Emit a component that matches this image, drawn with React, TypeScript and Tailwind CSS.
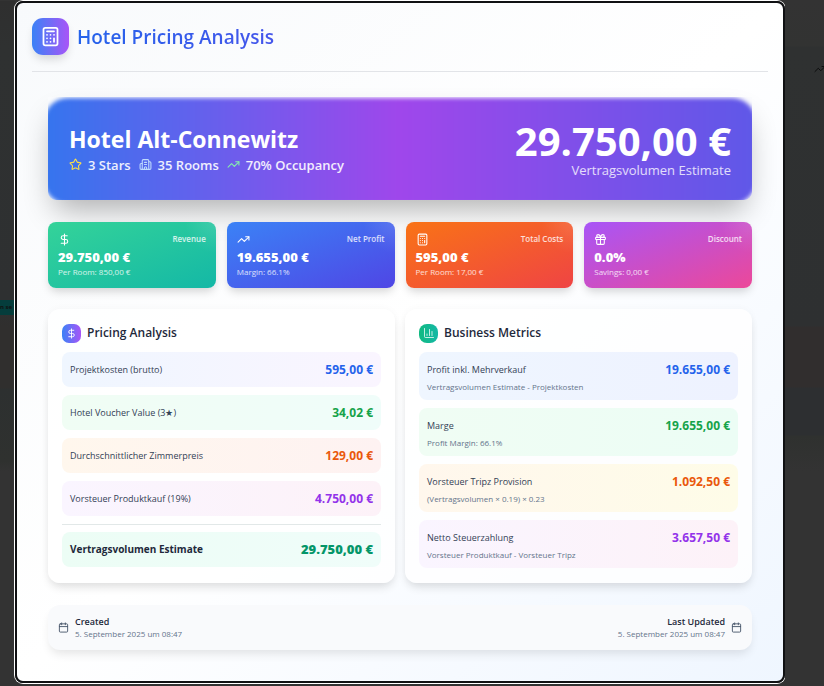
import type { ReactNode } from 'react';
import {
  Building2,
  Calculator,
  Calendar,
  ChartColumn,
  DollarSign,
  Gift,
  Star,
  TrendingUp,
} from 'lucide-react';

const stats = [
  {
    label: 'Revenue',
    value: '29.750,00 €',
    note: 'Per Room: 850,00 €',
    Icon: DollarSign,
    fill: 'bg-[linear-gradient(to_bottom_right,#34d399,#14b8a6)]',
  },
  {
    label: 'Net Profit',
    value: '19.655,00 €',
    note: 'Margin: 66.1%',
    Icon: TrendingUp,
    fill: 'bg-[linear-gradient(to_bottom_right,#3b82f6,#4f46e5)]',
  },
  {
    label: 'Total Costs',
    value: '595,00 €',
    note: 'Per Room: 17,00 €',
    Icon: Calculator,
    fill: 'bg-[linear-gradient(to_bottom_right,#f97316,#ef4444)]',
  },
  {
    label: 'Discount',
    value: '0.0%',
    note: 'Savings: 0,00 €',
    Icon: Gift,
    fill: 'bg-[linear-gradient(to_bottom_right,#a855f7,#ec4899)]',
  },
];

const pricing = [
  {
    label: 'Projektkosten (brutto)',
    value: '595,00 €',
    fill: 'bg-[linear-gradient(to_right,#eff6ff,#faf5ff)]',
    color: 'text-[#2563eb]',
  },
  {
    label: 'Hotel Voucher Value (3★)',
    value: '34,02 €',
    fill: 'bg-[linear-gradient(to_right,#f0fdf4,#f0fdfa)]',
    color: 'text-[#16a34a]',
  },
  {
    label: 'Durchschnittlicher Zimmerpreis',
    value: '129,00 €',
    fill: 'bg-[linear-gradient(to_right,#fff7ed,#fef2f2)]',
    color: 'text-[#ea580c]',
  },
  {
    label: 'Vorsteuer Produktkauf (19%)',
    value: '4.750,00 €',
    fill: 'bg-[linear-gradient(to_right,#faf5ff,#fdf2f8)]',
    color: 'text-[#9333ea]',
  },
];

const metrics = [
  {
    label: 'Profit inkl. Mehrverkauf',
    value: '19.655,00 €',
    note: 'Vertragsvolumen Estimate - Projektkosten',
    fill: 'bg-[linear-gradient(to_right,#eff6ff,#eef2ff)]',
    color: 'text-[#2563eb]',
  },
  {
    label: 'Marge',
    value: '19.655,00 €',
    note: 'Profit Margin: 66.1%',
    fill: 'bg-[linear-gradient(to_right,#f0fdf4,#ecfdf5)]',
    color: 'text-[#16a34a]',
  },
  {
    label: 'Vorsteuer Tripz Provision',
    value: '1.092,50 €',
    note: '(Vertragsvolumen × 0.19) × 0.23',
    fill: 'bg-[linear-gradient(to_right,#fff7ed,#fefce8)]',
    color: 'text-[#ea580c]',
  },
  {
    label: 'Netto Steuerzahlung',
    value: '3.657,50 €',
    note: 'Vorsteuer Produktkauf - Vorsteuer Tripz',
    fill: 'bg-[linear-gradient(to_right,#faf5ff,#fdf2f8)]',
    color: 'text-[#9333ea]',
  },
];

function Panel({ title, icon, children }: { title: string; icon: ReactNode; children: ReactNode }) {
  return (
    <section className="rounded-xl bg-white/80 px-3.5 pt-3.5 pb-[15px] shadow-[0_6px_10px_-2px_rgba(0,0,0,0.12),0_0_8px_rgba(0,0,0,0.03)]">
      <h3 className="flex h-5 items-center gap-1.5 text-xs font-semibold text-[#1e293b]">
        {icon}
        {title}
      </h3>
      {children}
    </section>
  );
}

export default function App() {
  return (
    <div className="flex min-h-screen items-start overflow-hidden bg-[#333333] pt-px font-['Open_Sans','Noto_Sans',sans-serif]">
      <div className="w-[15px] shrink-0 self-stretch overflow-hidden bg-[linear-gradient(to_bottom,#2f2f2f_0,#2f3131_45px,#2e3031_300px,#302f2e_326px,#302f2e_387px,#2d3030_388px,#2f312f_460px,#333333_470px)] pt-[299px]">
        <div className="flex h-[15px] items-center bg-[#053d3c] text-[6px] font-bold whitespace-nowrap text-[#111111]">
          n se
        </div>
      </div>

      <div
        role="dialog"
        aria-labelledby="dialog-title"
        className="min-w-0 flex-1 rounded-lg border-2 border-[#101113] bg-[linear-gradient(to_bottom_right,#f8fafc,#ffffff_50%,#eff6ff)] pb-[31px] shadow-[0_0_0_1px_#ffffff]"
      >
        <header className="mx-[15px] flex items-center gap-2 border-b border-[#e2e4e8] pt-[15px] pb-4">
          <span className="flex size-[37px] items-center justify-center rounded-[11px] bg-[linear-gradient(to_right,#3b82f6,#a855f7)] text-white shadow-[0_6px_10px_-2px_rgba(0,0,0,0.15)]">
            <Calculator size={21} strokeWidth={2} />
          </span>
          <h1
            id="dialog-title"
            className="grow bg-[linear-gradient(to_right,#2563eb,#9333ea)] bg-clip-text text-[19px] leading-7 font-semibold text-transparent"
          >
            Hotel Pricing Analysis
          </h1>
        </header>

        <main className="flex flex-col gap-[22px] px-[31px] pt-[25px]">
          <section className="relative rounded-2xl shadow-[0_16px_30px_-6px_rgba(0,0,0,0.3)]">
            <div className="absolute inset-0 overflow-hidden rounded-b-lg bg-[#fafbfd]">
              <div className="absolute -inset-x-1 top-px -bottom-1 rounded-3xl bg-[linear-gradient(to_right,#3575ee,#9f47eb_50%,#5f58e8)] blur-[2px]" />
            </div>
            <div className="relative flex h-[103px] items-center justify-between px-[21px] text-white">
              <div>
                <h2 className="text-[23px] leading-8 font-bold">Hotel Alt-Connewitz</h2>
                <ul className="flex gap-2 text-[13px] leading-5 font-semibold text-white/90">
                  <li className="flex items-center gap-1.5">
                    <Star size={13} className="text-[#fde047]" />3 Stars
                  </li>
                  <li className="flex items-center gap-1.5">
                    <Building2 size={13} className="text-[#bfdbfe]" />
                    35 Rooms
                  </li>
                  <li className="flex items-center gap-1.5">
                    <TrendingUp size={13} className="text-[#86efac]" />
                    70% Occupancy
                  </li>
                </ul>
              </div>
              <div className="text-right">
                <p className="text-[40px] leading-[42px] font-bold">29.750,00 €</p>
                <p className="text-[13px] leading-4 text-white/80">Vertragsvolumen Estimate</p>
              </div>
            </div>
          </section>

          <section className="grid grid-cols-4 gap-[11px]">
            {stats.map(({ label, value, note, Icon, fill }) => (
              <article
                key={label}
                className={`relative h-[66px] overflow-hidden rounded-lg px-2.5 pt-2.5 text-white shadow-[0_5px_10px_-2px_rgba(0,0,0,0.18)] ${fill}`}
              >
                <div className="absolute top-0 right-0 size-8 bg-[radial-gradient(circle_at_top_right,rgba(255,255,255,0.12),transparent_70%)]" />
                <div className="flex items-center justify-between">
                  <Icon size={13} />
                  <h3 className="text-[8px] leading-[14px] font-semibold text-white/80">{label}</h3>
                </div>
                <p className="text-[13px] leading-[22px] font-extrabold">{value}</p>
                <p className="text-[8px] leading-2 font-medium text-white/80">{note}</p>
              </article>
            ))}
          </section>

          <div className="-mt-px grid grid-cols-2 gap-2.5">
            <Panel
              title="Pricing Analysis"
              icon={
                <span className="flex size-[19px] items-center justify-center rounded-[7px] bg-[linear-gradient(to_right,#3b82f6,#a855f7)] text-white">
                  <DollarSign size={11} />
                </span>
              }
            >
              <dl className="mt-[9px] flex flex-col gap-2">
                {pricing.map(({ label, value, fill, color }) => (
                  <div
                    key={label}
                    className={`flex h-[35px] items-center justify-between rounded-lg px-2 ${fill}`}
                  >
                    <dt className="text-[9px] font-medium text-[#334155]">{label}</dt>
                    <dd className={`text-xs font-bold ${color}`}>{value}</dd>
                  </div>
                ))}
                <div className="border-t border-[#e2e8e8] pt-[7px]">
                  <div className="flex h-[35px] items-center justify-between rounded-lg bg-[linear-gradient(to_right,#ecfdf5,#f0fdfa)] px-2">
                    <dt className="text-[10px] font-bold text-[#1e293b]">
                      Vertragsvolumen Estimate
                    </dt>
                    <dd className="text-[13px] font-extrabold text-[#059669]">29.750,00 €</dd>
                  </div>
                </div>
              </dl>
            </Panel>

            <Panel
              title="Business Metrics"
              icon={
                <span className="flex size-[19px] items-center justify-center rounded-[8px] bg-[linear-gradient(to_right,#10b981,#14b8a6)] text-white">
                  <ChartColumn size={12} strokeWidth={1.5} />
                </span>
              }
            >
              <dl className="mt-[9px] flex flex-col gap-2">
                {metrics.map(({ label, value, note, fill, color }) => (
                  <div key={label} className={`h-12 rounded-lg px-2 pt-2 ${fill}`}>
                    <div className="flex h-5 items-center justify-between">
                      <dt className="text-[9px] font-medium text-[#334155]">{label}</dt>
                      <dd className={`text-xs font-bold ${color}`}>{value}</dd>
                    </div>
                    <dd className="text-[8px] leading-[14px] text-[#64748b]">{note}</dd>
                  </div>
                ))}
              </dl>
            </Panel>
          </div>

          <footer className="flex h-[45px] items-center justify-between rounded-xl bg-[#f9fafc] px-2.5 shadow-[0_6px_10px_-2px_rgba(0,0,0,0.1)]">
            <div className="flex items-center gap-1.5">
              <Calendar size={11} className="text-[#475569]" />
              <div>
                <p className="text-[9px] leading-3 font-semibold text-[#1e293b]">Created</p>
                <p className="text-[8px] leading-[11px] text-[#64748b]">
                  5. September 2025 um 08:47
                </p>
              </div>
            </div>
            <div className="flex items-center gap-1.5 text-right">
              <div>
                <p className="text-[9px] leading-3 font-semibold text-[#1e293b]">Last Updated</p>
                <p className="text-[8px] leading-[11px] text-[#64748b]">
                  5. September 2025 um 08:47
                </p>
              </div>
              <Calendar size={11} className="text-[#475569]" />
            </div>
          </footer>
        </main>
      </div>

      <div className="flex w-[39px] shrink-0 justify-end self-stretch overflow-hidden bg-[linear-gradient(to_bottom,#333333_0,#323332_45px,#2f3131_46px,#2e3031_325px,#312e2e_326px,#312e2e_386px,#2d2f31_387px,#2d2f31_434px,#2f312f_435px,#333333_470px)] pt-[62px]">
        <TrendingUp size={12} className="-mr-0.5 text-[#0c0d0d]" />
      </div>
    </div>
  );
}
